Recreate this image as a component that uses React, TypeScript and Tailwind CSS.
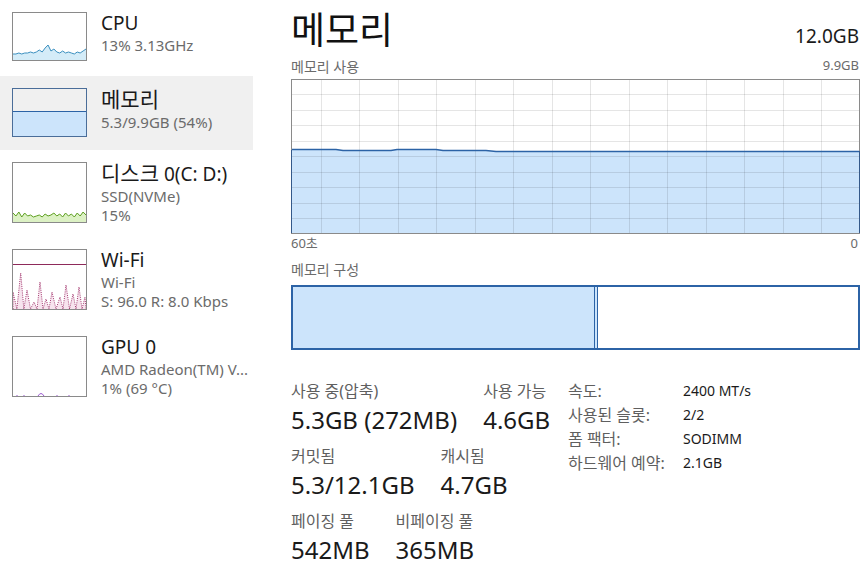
import React from "react";

const BLUE_FILL = "#cce4fb";
const BLUE_LINE = "#2c63a6";

function CpuThumb() {
  const ys = [42, 42, 41, 42, 41, 41, 40, 41, 40, 38, 40, 36, 33, 39, 37, 40, 41, 39, 41, 40, 41, 42, 40, 41, 39, 37];
  const pts = ys.map((y, i) => `${1 + i * 2.92},${y}`).join(" ");
  return (
    <svg width="75" height="49" className="block">
      <polygon points={`1,48 ${pts} 74,48`} fill="#d4ecf8" />
      <polyline points={pts} fill="none" stroke="#3a8fbf" strokeWidth="1" />
      <rect x="0.5" y="0.5" width="74" height="48" fill="none" stroke="#8a8a8a" />
    </svg>
  );
}

function MemThumb() {
  return (
    <svg width="75" height="49" className="block">
      <rect x="0" y="23" width="75" height="26" fill={BLUE_FILL} />
      <line x1="0" y1="23.5" x2="75" y2="23.5" stroke={BLUE_LINE} />
      <rect x="0.5" y="0.5" width="74" height="48" fill="none" stroke="#4a6d99" />
    </svg>
  );
}

function DiskThumb() {
  const ys = [51, 54, 50, 55, 51, 54, 53, 55, 54, 53, 55, 52, 54, 53, 51, 54, 52, 55, 51, 54, 52, 55, 51, 54, 50, 53];
  const pts = ys.map((y, i) => `${1 + i * 2.92},${y}`).join(" ");
  return (
    <svg width="75" height="61" className="block">
      <polygon points={`1,60 ${pts} 74,60`} fill="#dcf1c4" />
      <polyline points={pts} fill="none" stroke="#5c9e1e" strokeWidth="1" />
      <rect x="0.5" y="0.5" width="74" height="60" fill="none" stroke="#8a8a8a" />
    </svg>
  );
}

function WifiThumb() {
  const peaks: [number, number][] = [
    [1, 43], [8.7, 24], [15, 41], [22, 53], [28, 33], [34, 50], [40, 43], [48, 48], [54, 36], [61, 45], [67, 38], [73, 48],
  ];
  let d = "M1,60";
  peaks.forEach(([x, y], i) => {
    d += ` L${x},${y}`;
    const next = peaks[i + 1];
    if (next) d += ` L${(x + next[0]) / 2},60`;
  });
  d += " L74,60";
  return (
    <svg width="75" height="61" className="block">
      <path d={d + " Z"} fill="#f7e4ee" />
      <path d={d} fill="none" stroke="#a3386f" strokeWidth="1" strokeDasharray="1 1.2" />
      <line x1="0" y1="15.5" x2="75" y2="15.5" stroke="#8e2a5a" />
      <rect x="0.5" y="0.5" width="74" height="60" fill="none" stroke="#8a8a8a" />
    </svg>
  );
}

function GpuThumb() {
  return (
    <svg width="75" height="61" className="block">
      <path d="M4,60 L6,60 M11,60 L13,60 M44,60 L46,60 M56,60 L58,60" stroke="#9b59d0" strokeWidth="1" />
      <path d="M26,60 Q29,55 32,60" fill="none" stroke="#9b59d0" strokeWidth="1" />
      <rect x="0.5" y="0.5" width="74" height="60" fill="none" stroke="#8a8a8a" />
    </svg>
  );
}

const sideItems = [
  { title: "CPU", subs: ["13% 3.13GHz"], h: "h-[76px]", thumb: <CpuThumb />, selected: false },
  { title: "메모리", subs: ["5.3/9.9GB (54%)"], h: "h-[74px]", thumb: <MemThumb />, selected: true },
  { title: "디스크 0(C: D:)", subs: ["SSD(NVMe)", "15%"], h: "h-[87px]", thumb: <DiskThumb />, selected: false },
  { title: "Wi-Fi", subs: ["Wi-Fi", "S: 96.0 R: 8.0 Kbps"], h: "h-[87px]", thumb: <WifiThumb />, selected: false },
  { title: "GPU 0", subs: ["AMD Radeon(TM) V...", "1% (69 °C)"], h: "h-[87px]", thumb: <GpuThumb />, selected: false },
];

// Korean glyphs in the original UI font run wider than the Latin ones, so Hangul gets a slightly bigger size
function SideTitle({ text }: { text: string }) {
  const parts = text.split(/([가-힣]+)/);
  return (
    <div className="whitespace-nowrap text-[19px] leading-[22px] text-[#1a1a1a]">
      {parts.map((p, i) =>
        /[가-힣]/.test(p) ? (
          <span key={i} className="text-[21px]">
            {p}
          </span>
        ) : (
          <span key={i}>{p}</span>
        )
      )}
    </div>
  );
}

function UsageGraph() {
  const W = 569;
  const H = 155;
  const vx = Array.from({ length: 14 }, (_, k) => 29.7 + 38.5 * k);
  const hy = Array.from({ length: 9 }, (_, k) => 15.45 * (k + 1));
  const top = "0,70.5 45,70.5 52,71.5 100,71.5 106,70.5 145,70.5 152,71.5 195,71.5 205,72.5 569,72.5";
  return (
    <svg width={W} height={H} className="block">
      <rect x="0" y="0" width={W} height={H} fill="#fff" />
      <polygon points={`${top} 569,155 0,155`} fill={BLUE_FILL} />
      {vx.map((x) => (
        <line key={x} x1={Math.round(x) + 0.5} y1="0" x2={Math.round(x) + 0.5} y2={H} stroke="#000" strokeOpacity="0.1" />
      ))}
      {hy.map((y) => (
        <line key={y} x1="0" y1={Math.round(y) + 0.5} x2={W} y2={Math.round(y) + 0.5} stroke="#000" strokeOpacity="0.1" />
      ))}
      <polyline points={top} fill="none" stroke={BLUE_LINE} strokeWidth="1.5" />
      <rect x="0.5" y="0.5" width={W - 1} height={H - 1} fill="none" stroke="#8a8a8a" />
      <line x1="0.5" y1="71" x2="0.5" y2="154" stroke="#34598a" />
      <line x1={W - 0.5} y1="72" x2={W - 0.5} y2="154" stroke="#34598a" />
    </svg>
  );
}

function Stat({ label, value }: { label: string; value: string }) {
  return (
    <div className="flex flex-col">
      <div className="whitespace-nowrap text-[16px] leading-[20px] text-[#5f5f5f]">{label}</div>
      <div className="mt-[4px] whitespace-nowrap text-[24px] leading-[30px] text-[#1a1a1a]">{value}</div>
    </div>
  );
}

const specs = [
  ["속도:", "2400 MT/s"],
  ["사용된 슬롯:", "2/2"],
  ["폼 팩터:", "SODIMM"],
  ["하드웨어 예약:", "2.1GB"],
];

export default function App() {
  return (
    <div className="flex h-[569px] w-[868px] overflow-hidden bg-white font-['Noto_Sans','Noto_Sans_CJK_KR',sans-serif]">
      <aside className="flex w-[253px] shrink-0 flex-col">
        {sideItems.map((item) => (
          <div
            key={item.title}
            className={`flex ${item.h} gap-[14px] pl-[12px] pt-[12px] ${item.selected ? "bg-[#f0f0f0]" : ""}`}
          >
            <div className="shrink-0">{item.thumb}</div>
            <div className="flex min-w-0 flex-col">
              <SideTitle text={item.title} />
              <div className="mt-[2px] flex flex-col">
                {item.subs.map((s) => (
                  <div key={s} className="whitespace-nowrap text-[15px] leading-[19px] text-[#6b6b6b]">
                    {s}
                  </div>
                ))}
              </div>
            </div>
          </div>
        ))}
      </aside>

      <main className="box-content flex w-[569px] shrink-0 flex-col pl-[38px]">
        <div className="flex h-[57px] items-start justify-between pt-[10px]">
          <h1 className="text-[37px] leading-[40px] text-[#111]">메모리</h1>
          <div className="mt-[15px] mr-[1px] text-[19px] leading-[22px] text-[#1a1a1a]">12.0GB</div>
        </div>

        <div className="mb-[4px] flex h-[18px] items-center justify-between text-[13px] text-[#6b6b6b]">
          <span className="text-[14px]">메모리 사용</span>
          <span className="mr-[1px]">9.9GB</span>
        </div>
        <UsageGraph />
        <div className="flex h-[20px] items-center justify-between text-[13px] text-[#6b6b6b]">
          <span>60초</span>
          <span className="mr-[2px]">0</span>
        </div>

        <div className="mt-[6px] mb-[7px] flex h-[18px] items-center text-[14px] text-[#6b6b6b]">메모리 구성</div>
        <div className="flex h-[65px] border-2 border-[#2c63a6]">
          <div className="w-[301px] bg-[#cce4fb]" />
          <div className="w-[1px] bg-[#2c63a6]" />
          <div className="w-[2px] bg-[#cce4fb]" />
          <div className="w-[1px] bg-[#2c63a6]" />
          <div className="flex-1 bg-white" />
        </div>

        <div className="mt-[31px] flex items-start">
          <div className="flex w-[277px] shrink-0 flex-col gap-[11px]">
            <div className="flex gap-[26px]">
              <Stat label="사용 중(압축)" value="5.3GB (272MB)" />
              <Stat label="사용 가능" value="4.6GB" />
            </div>
            <div className="flex gap-[26px]">
              <Stat label="커밋됨" value="5.3/12.1GB" />
              <Stat label="캐시됨" value="4.7GB" />
            </div>
            <div className="flex gap-[26px]">
              <Stat label="페이징 풀" value="542MB" />
              <Stat label="비페이징 풀" value="365MB" />
            </div>
          </div>
          <div className="-mt-[2px] grid grid-cols-[115px_auto] content-start leading-[24px]">
            {specs.map(([k, v]) => (
              <React.Fragment key={k}>
                <span className="whitespace-nowrap text-[16px] text-[#5f5f5f]">{k}</span>
                <span className="whitespace-nowrap text-[14px] text-[#1a1a1a]">{v}</span>
              </React.Fragment>
            ))}
          </div>
        </div>
      </main>
    </div>
  );
}
